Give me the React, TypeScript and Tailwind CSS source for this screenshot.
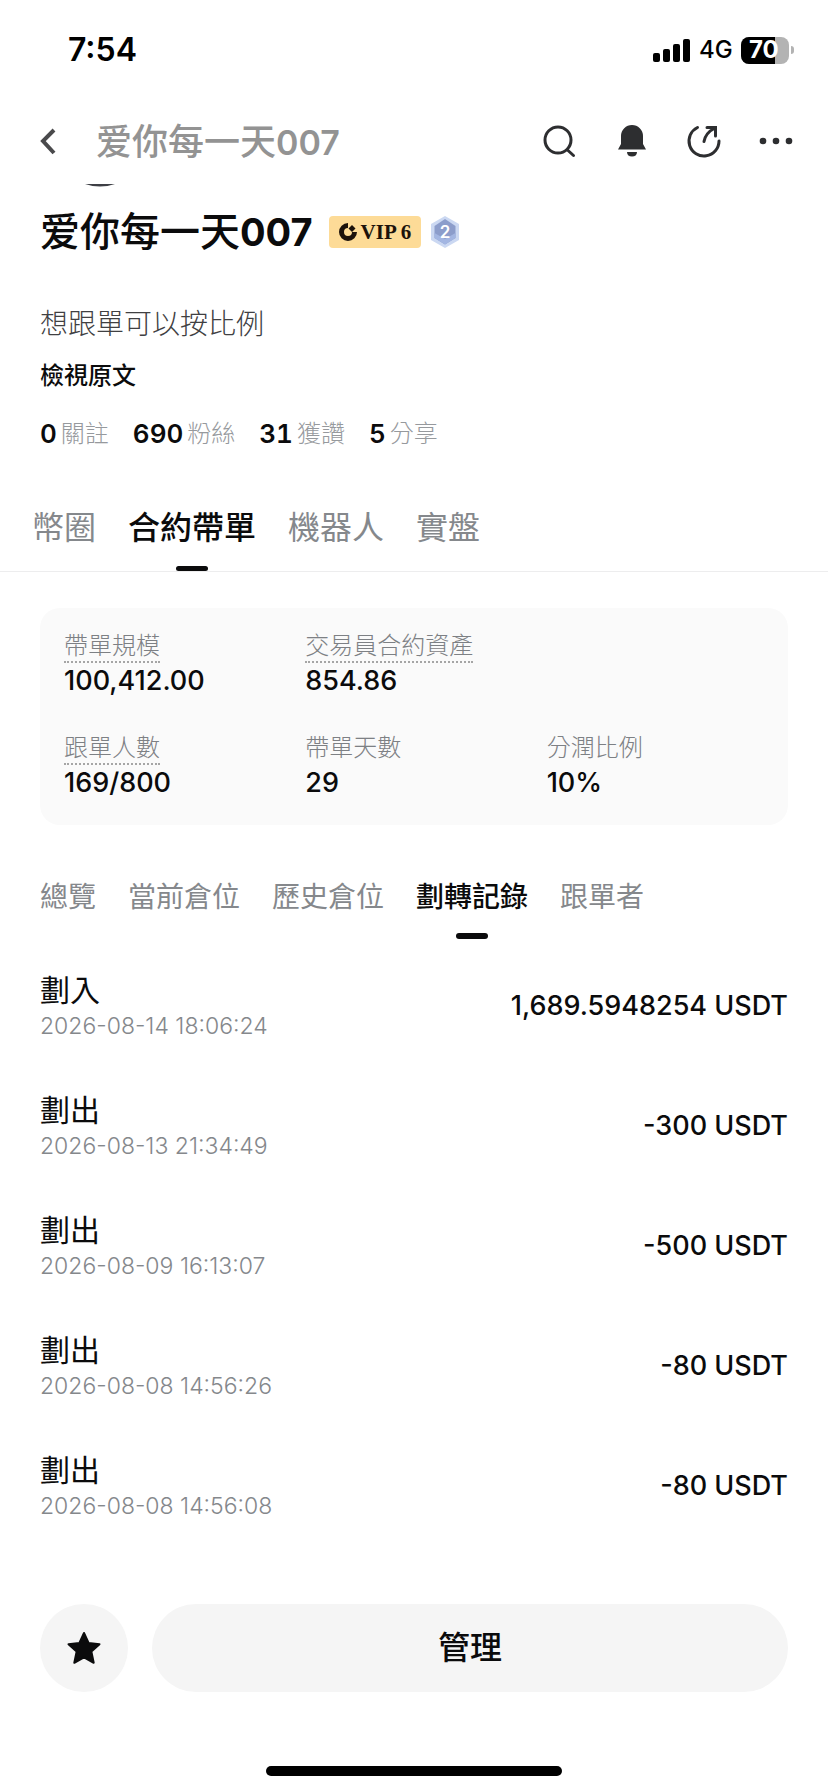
import { useState } from "react"

type Stat = { value: string; label: string }
type Metric = { label: string; value: string; hint?: boolean }
type Transfer = { id: number; type: string; time: string; amount: string }

const stats: Stat[] = [
	{ value: "0", label: "關註" },
	{ value: "690", label: "粉絲" },
	{ value: "31", label: "獲讚" },
	{ value: "5", label: "分享" },
]

const mainTabs = ["幣圈", "合約帶單", "機器人", "實盤"]
const subTabs = ["總覽", "當前倉位", "歷史倉位", "劃轉記錄", "跟單者"]

const topMetrics: Metric[] = [
	{ label: "帶單規模", value: "100,412.00", hint: true },
	{ label: "交易員合約資產", value: "854.86", hint: true },
]

const bottomMetrics: Metric[] = [
	{ label: "跟單人數", value: "169/800", hint: true },
	{ label: "帶單天數", value: "29" },
	{ label: "分潤比例", value: "10%" },
]

const transfers: Transfer[] = [
	{ id: 1, type: "劃入", time: "2026-08-14 18:06:24", amount: "1,689.5948254 USDT" },
	{ id: 2, type: "劃出", time: "2026-08-13 21:34:49", amount: "-300 USDT" },
	{ id: 3, type: "劃出", time: "2026-08-09 16:13:07", amount: "-500 USDT" },
	{ id: 4, type: "劃出", time: "2026-08-08 14:56:26", amount: "-80 USDT" },
	{ id: 5, type: "劃出", time: "2026-08-08 14:56:08", amount: "-80 USDT" },
]

const StatusBar = () => (
	<div className="flex h-[100px] items-center justify-between pr-[34px] pl-[68px] text-black">
		<span className="text-[32px] leading-10 font-semibold">7:54</span>
		<div className="flex items-center">
			<svg width="38" height="24" viewBox="0 0 38 24" aria-hidden="true">
				<rect x="0" y="15" width="7" height="9" rx="2" />
				<rect x="10" y="11" width="7" height="13" rx="2" />
				<rect x="20" y="6" width="7" height="18" rx="2" />
				<rect x="30" y="1" width="7" height="23" rx="2" />
			</svg>
			<span className="ml-2 w-8 text-2xl font-medium">4G</span>
			<div className="relative ml-2.5 flex h-[27px] w-12 items-center overflow-hidden rounded-lg bg-[#b3b3b3]">
				<div className="absolute inset-y-0 left-0 w-[70%] bg-black" />
				<span className="relative pl-2 text-2xl leading-7 font-bold text-white">70</span>
			</div>
			<div className="ml-0.5 h-2 w-[3px] rounded-r-full bg-[#b3b3b3]" />
		</div>
	</div>
)

const Header = () => (
	<header className="flex h-[84px] items-center pr-[34px] pl-10">
		<button type="button" aria-label="返回" className="mr-10 cursor-pointer">
			<svg width="16" height="28" viewBox="0 0 16 28" fill="none" stroke="#4a4a4c" strokeWidth="4">
				<path d="M14 2L3 13l11 12" />
			</svg>
		</button>
		<p className="flex-1 font-['Inter','Noto_Sans_CJK_SC',sans-serif] text-4xl font-medium text-[#939393]">
			爱你每一天<span className="text-[34px] font-semibold">007</span>
		</p>
		<div className="flex items-center gap-9">
			<button type="button" aria-label="搜尋" className="cursor-pointer">
				<svg
					width="36"
					height="36"
					viewBox="0 0 36 36"
					fill="none"
					stroke="#2d2e30"
					strokeWidth="3"
					strokeLinecap="round"
				>
					<circle cx="16" cy="16" r="13" />
					<path d="M25.500 26l6 5.500" />
				</svg>
			</button>
			<button type="button" aria-label="通知" className="cursor-pointer">
				<svg width="36" height="36" viewBox="0 0 36 36" fill="#2d2e30">
					<path d="M18 1A11 11 0 0 1 29 12v8l3 5.500H4L7 20v-8A11 11 0 0 1 18 1z" />
					<path d="M13 28h10c0 3-2 4.500-5 4.500S13 31 13 28z" />
				</svg>
			</button>
			<button type="button" aria-label="分享" className="cursor-pointer">
				<svg
					width="36"
					height="36"
					viewBox="0 0 36 36"
					fill="none"
					stroke="#2d2e30"
					strokeWidth="3"
					strokeLinecap="round"
				>
					<path d="M11.500 3.500A15 15 0 1 0 33 17" />
					<path d="M18 17.500C19 12 23 7 29 4" />
					<path d="M21 3.500h8.500v8.500" />
				</svg>
			</button>
			<button type="button" aria-label="更多" className="cursor-pointer">
				<svg width="36" height="36" viewBox="0 0 36 36" fill="#2d2e30">
					<circle cx="5" cy="17" r="3.3" />
					<circle cx="18" cy="17" r="3.3" />
					<circle cx="31" cy="17" r="3.3" />
				</svg>
			</button>
		</div>
	</header>
)

const VipBadge = () => (
	<span className="flex h-8 items-center gap-1 rounded-sm bg-[#fddb97] px-2.5 text-[#1c120b]">
		<svg width="18" height="18" viewBox="0 0 18 18" fill="#1c120b">
			<path d="M9 0v5a4 4 0 1 0 4 4h5A9 9 0 1 1 9 0z" />
			<path d="M13 2l3.500 3.500L13 9 9.500 5.500z" />
		</svg>
		<span className="font-['Liberation_Serif',serif] text-[21px] leading-8 font-bold">VIP 6</span>
	</span>
)

const LevelBadge = () => (
	<svg width="28" height="32" viewBox="0 0 28 32" role="img" aria-label="等級 2">
		<path d="M14 0l14 8v16l-14 8L0 24V8z" fill="#cbd8f2" />
		<path d="M14 3l10.500 7v12L14 28.500 3.500 22V10z" fill="#8c9dcb" />
		<path d="M3.500 22L14 28.500 24.500 22v-5L14 23 3.500 17z" fill="#a3b6e2" />
		<text x="14" y="22" textAnchor="middle" fontSize="17" fontWeight="600" fill="#fff">
			2
		</text>
	</svg>
)

const MetricItem = ({ label, value, hint }: Metric) => (
	<div className="flex flex-col items-start">
		<dt
			className={`h-8 text-2xl leading-[30px] font-light whitespace-nowrap text-[#7d8084] ${hint ? "border-b-2 border-dotted border-[#a5a5a5]" : ""}`}
		>
			{label}
		</dt>
		<dd className="text-[27px] leading-9 font-medium">{value}</dd>
	</div>
)

const App = () => {
	const [mainTab, setMainTab] = useState("合約帶單")
	const [subTab, setSubTab] = useState("劃轉記錄")

	return (
		<div className="flex min-h-screen flex-col bg-white font-['Inter','Noto_Sans_CJK_TC',sans-serif] text-[#0b0b0c]">
			<StatusBar />
			<Header />

			<main className="flex-1">
				<section className="px-10">
					<div className="h-0.5 w-[120px]">
						<svg className="mx-auto" width="30" height="3" viewBox="0 0 30 3" aria-hidden="true">
							<path d="M0 0h30Q15 5 0 0z" fill="#3d3f45" />
						</svg>
					</div>
					<div className="mt-[22px] flex h-12 items-center">
						<h1 className="font-['Inter','Noto_Sans_CJK_SC',sans-serif] text-[40px] leading-[48px] font-medium whitespace-nowrap">
							爱你每一天<span className="text-[38px] font-bold">007</span>
						</h1>
						<div className="ml-4 flex items-center gap-2.5">
							<VipBadge />
							<LevelBadge />
						</div>
					</div>
					<p className="mt-12 text-[28px] leading-10 font-light text-[#404042]">
						想跟單可以按比例
					</p>
					<button type="button" className="mt-4 block cursor-pointer text-2xl font-medium">
						檢視原文
					</button>
					<ul className="mt-[22px] flex gap-6">
						{stats.map((stat) => (
							<li key={stat.label} className="flex items-center gap-1">
								<span className="text-[26px] leading-10 font-semibold tabular-nums">
									{stat.value}
								</span>
								<span className="text-2xl font-light text-[#96999d]">{stat.label}</span>
							</li>
						))}
					</ul>
				</section>

				<nav className="mt-[42px] flex gap-8 border-b border-[#ededee] px-8">
					{mainTabs.map((tab) => (
						<button
							key={tab}
							type="button"
							onClick={() => setMainTab(tab)}
							className={`flex cursor-pointer flex-col items-center text-[32px] leading-[64px] ${mainTab === tab ? "font-medium" : "text-[#85888c]"}`}
						>
							{tab}
							<span
								className={`mt-1.5 h-[5px] w-8 rounded-full ${mainTab === tab ? "bg-[#0b0b0c]" : ""}`}
							/>
						</button>
					))}
				</nav>

				<section className="mx-10 mt-9 rounded-[20px] bg-[#fafafa] px-6 pt-[23px] pb-6">
					<dl className="grid grid-cols-3 gap-x-6">
						{topMetrics.map((metric) => (
							<MetricItem key={metric.label} {...metric} />
						))}
					</dl>
					<dl className="mt-[34px] grid grid-cols-3 gap-x-6">
						{bottomMetrics.map((metric) => (
							<MetricItem key={metric.label} {...metric} />
						))}
					</dl>
				</section>

				<nav className="mt-10 flex gap-8 px-10">
					{subTabs.map((tab) => (
						<button
							key={tab}
							type="button"
							onClick={() => setSubTab(tab)}
							className={`flex cursor-pointer flex-col items-center text-[28px] leading-[64px] ${subTab === tab ? "font-medium" : "text-[#85888c]"}`}
						>
							{tab}
							<span
								className={`mt-1 h-1.5 w-8 rounded-full ${subTab === tab ? "bg-[#0b0b0c]" : ""}`}
							/>
						</button>
					))}
				</nav>

				<ul className="mt-[7px] px-10">
					{transfers.map((item) => (
						<li key={item.id} className="flex h-[120px] items-center justify-between">
							<div>
								<p className="text-[30px] leading-10">{item.type}</p>
								<p className="text-[23px] leading-8 font-light text-[#85888c]">{item.time}</p>
							</div>
							<p className="text-[27px] font-medium">{item.amount}</p>
						</li>
					))}
				</ul>
			</main>

			<footer className="px-10 pb-4">
				<div className="flex gap-6">
					<button
						type="button"
						aria-label="收藏"
						className="flex size-[88px] cursor-pointer items-center justify-center rounded-full bg-[#f5f5f5]"
					>
						<svg
							width="34"
							height="34"
							viewBox="0 0 34 34"
							fill="#0b0b0c"
							stroke="#0b0b0c"
							strokeWidth="2"
							strokeLinejoin="round"
						>
							<path d="M17 2l4.600 10L32.500 13.200l-8.100 7.400 2.300 11.200L17 26.400l-9.700 5.400 2.300-11.200L1.500 13.200 12.400 12z" />
						</svg>
					</button>
					<button
						type="button"
						className="h-[88px] flex-1 cursor-pointer rounded-full bg-[#f5f5f5] text-[32px] font-medium"
					>
						管理
					</button>
				</div>
				<div className="mx-auto mt-[74px] h-2.5 w-[296px] rounded-full bg-black" />
			</footer>
		</div>
	)
}
export default App
